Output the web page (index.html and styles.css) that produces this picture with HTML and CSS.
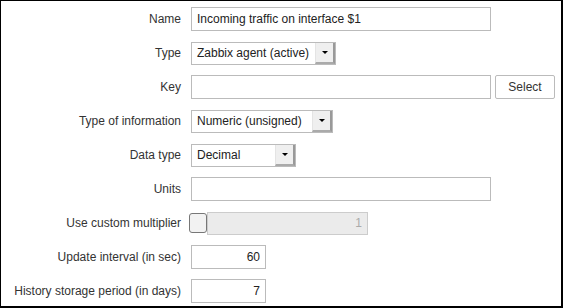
FILE: index.html
```html
<!DOCTYPE html>
<html lang="en">
<head>
    <meta charset="UTF-8">
    <title>Item</title>
    <link rel="stylesheet" href="styles.css">
</head>
<body>
    <!-- Item form -->
    <form class="item-form">
        <label class="lbl">Name</label>
        <div class="field"><input type="text" class="txt wide" value="Incoming traffic on interface $1"></div>

        <label class="lbl">Type</label>
        <div class="field">
            <div class="select w-type">
                <span class="select-value">Zabbix agent (active)</span>
                <span class="select-btn"><svg width="6" height="3" viewBox="0 0 6 3"><path d="M0 0h6L3 3z" fill="#000"/></svg></span>
            </div>
        </div>

        <label class="lbl">Key</label>
        <div class="field">
            <input type="text" class="txt wide">
            <button type="button" class="btn">Select</button>
        </div>

        <label class="lbl">Type of information</label>
        <div class="field">
            <div class="select w-info">
                <span class="select-value">Numeric (unsigned)</span>
                <span class="select-btn"><svg width="6" height="3" viewBox="0 0 6 3"><path d="M0 0h6L3 3z" fill="#000"/></svg></span>
            </div>
        </div>

        <label class="lbl">Data type</label>
        <div class="field">
            <div class="select w-data">
                <span class="select-value">Decimal</span>
                <span class="select-btn"><svg width="6" height="3" viewBox="0 0 6 3"><path d="M0 0h6L3 3z" fill="#000"/></svg></span>
            </div>
        </div>

        <label class="lbl">Units</label>
        <div class="field"><input type="text" class="txt wide"></div>

        <label class="lbl">Use custom multiplier</label>
        <div class="field">
            <span class="check"></span>
            <input type="text" class="txt num multi" value="1" disabled>
        </div>

        <label class="lbl">Update interval (in sec)</label>
        <div class="field"><input type="text" class="txt num short" value="60"></div>

        <label class="lbl">History storage period (in days)</label>
        <div class="field"><input type="text" class="txt num short" value="7"></div>
    </form>
</body>
</html>
```

FILE: styles.css
```css
/* Item form */
html, body {
    margin: 0;
    padding: 0;
    background: #fff;
}
.item-form {
    box-sizing: border-box;
    width: 563px;
    height: 308px;
    border: solid #000;
    border-width: 1px 2px 2px 1px;
    padding-top: 6px;
    display: grid;
    grid-template-columns: 180px auto;
    grid-auto-rows: 24px;
    column-gap: 10px;
    row-gap: 10px;
    font-family: "Liberation Sans", Arial, sans-serif;
    font-size: 12px;
    color: #333;
}
.lbl {
    text-align: right;
    line-height: 24px;
    white-space: nowrap;
}
.field {
    display: flex;
    align-items: center;
    gap: 4px;
}
.txt {
    box-sizing: border-box;
    height: 24px;
    margin: 0;
    padding: 0 5px;
    border: 1px solid #bbb;
    background: #fff;
    font-family: inherit;
    font-size: 12px;
    color: #222;
    outline: none;
}
.wide {
    width: 300px;
}
.short {
    width: 75px;
}
.num {
    text-align: right;
}
.multi {
    width: 161px;
    height: 23px;
    margin-left: -4px;
    background: #ebebeb;
    border-color: #ccc;
    color: #aaa;
}
.check {
    box-sizing: border-box;
    width: 18px;
    height: 20px;
    margin-left: -2px;
    border: 1px solid #777;
    border-radius: 3px;
    background: #f2f2f2;
}
.btn {
    box-sizing: border-box;
    height: 24px;
    width: 60px;
    margin: 0;
    padding: 0;
    border: 1px solid #bbb;
    border-radius: 2px;
    background: #fff;
    font-family: inherit;
    font-size: 12px;
    color: #333;
}
.select {
    box-sizing: border-box;
    display: flex;
    height: 23px;
    border: 1px solid #bbb;
    background: #fff;
}
.select-value {
    flex: 1;
    padding-left: 5px;
    line-height: 21px;
    color: #222;
    white-space: nowrap;
}
.select-btn {
    box-sizing: border-box;
    width: 20px;
    display: flex;
    align-items: center;
    justify-content: center;
    background: #efefef;
    border-left: 1px solid #e4e4e4;
    border-right: 2px solid #999;
    border-bottom: 2px solid #aaa;
}
.w-type {
    width: 145px;
}
.w-info {
    width: 142px;
}
.w-data {
    width: 105px;
}
```
